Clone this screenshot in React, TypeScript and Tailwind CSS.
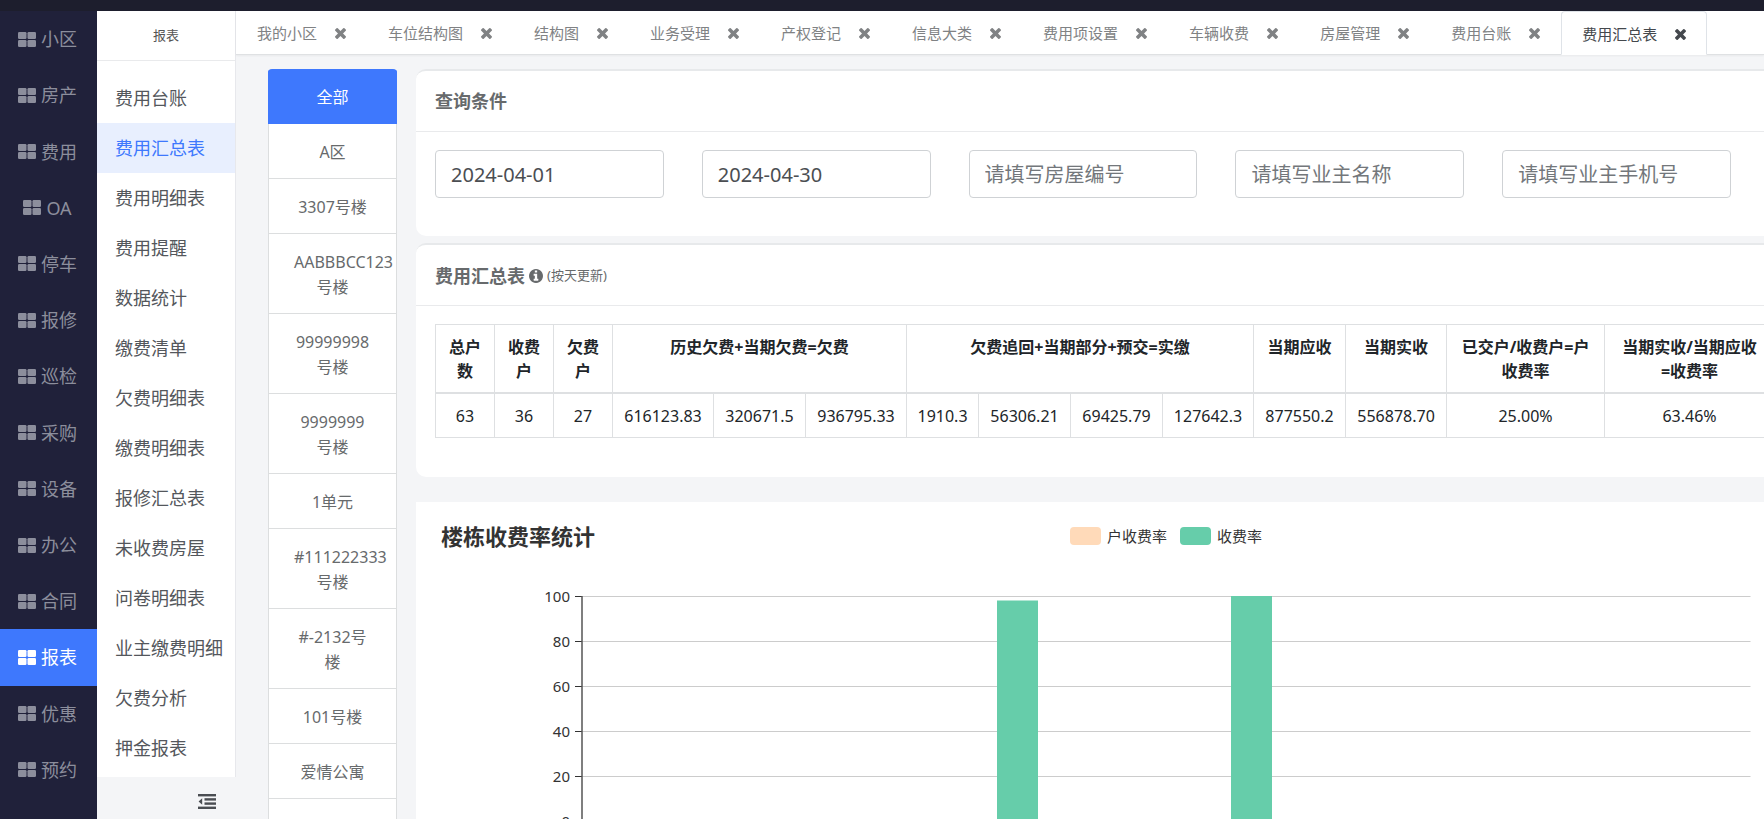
import React from 'react'

const modules = ['小区', '房产', '费用', 'OA', '停车', '报修', '巡检', '采购', '设备', '办公', '合同', '报表', '优惠', '预约']

const menus = [
  '费用台账',
  '费用汇总表',
  '费用明细表',
  '费用提醒',
  '数据统计',
  '缴费清单',
  '欠费明细表',
  '缴费明细表',
  '报修汇总表',
  '未收费房屋',
  '问卷明细表',
  '业主缴费明细',
  '欠费分析',
  '押金报表',
]

const tabs = [
  '我的小区',
  '车位结构图',
  '结构图',
  '业务受理',
  '产权登记',
  '信息大类',
  '费用项设置',
  '车辆收费',
  '房屋管理',
  '费用台账',
  '费用汇总表',
]

const floors = [
  '全部',
  'A区',
  '3307号楼',
  'AABBBCC123号楼',
  '99999998号楼',
  '9999999号楼',
  '1单元',
  '#111222333号楼',
  '#-2132号楼',
  '101号楼',
  '爱情公寓',
]

const filters = [
  { label: '开始时间', value: '2024-04-01' },
  { label: '结束时间', value: '2024-04-30' },
  { label: '房屋编号', placeholder: '请填写房屋编号' },
  { label: '业主名称', placeholder: '请填写业主名称' },
  { label: '业主手机号', placeholder: '请填写业主手机号' },
]

const headers = [
  { text: '总户数', span: 1 },
  { text: '收费户', span: 1 },
  { text: '欠费户', span: 1 },
  { text: '历史欠费+当期欠费=欠费', span: 3 },
  { text: '欠费追回+当期部分+预交=实缴', span: 4 },
  { text: '当期应收', span: 1 },
  { text: '当期实收', span: 1 },
  { text: '已交户/收费户=户收费率', span: 1 },
  { text: '当期实收/当期应收 =收费率', span: 1 },
]

const columns = [
  { value: '63', width: 59 },
  { value: '36', width: 59 },
  { value: '27', width: 59 },
  { value: '616123.83', width: 101 },
  { value: '320671.5', width: 92 },
  { value: '936795.33', width: 101 },
  { value: '1910.3', width: 72 },
  { value: '56306.21', width: 92 },
  { value: '69425.79', width: 92 },
  { value: '127642.3', width: 91 },
  { value: '877550.2', width: 92 },
  { value: '556878.70', width: 101 },
  { value: '25.00%', width: 158 },
  { value: '63.46%', width: 170 },
]

const ticks = [100, 80, 60, 40, 20, 0]

const bars = [
  { x: 581, value: 98 },
  { x: 815, value: 100 },
]

const GridIcon = () => (
  <svg className="w-[18px] h-[15px] shrink-0" viewBox="0 0 18 15" fill="currentColor" aria-hidden="true">
    <rect x="0" y="0" width="8.5" height="7" rx="1.2" />
    <rect x="9.5" y="0" width="8.5" height="7" rx="1.2" />
    <rect x="0" y="8" width="8.5" height="7" rx="1.2" />
    <rect x="9.5" y="8" width="8.5" height="7" rx="1.2" />
  </svg>
)

const CloseIcon = () => (
  <svg className="w-[11px] h-[11px]" viewBox="110 366 1188 1188" fill="currentColor" aria-hidden="true">
    <path d="M1298 1322q0 40-28 68l-136 136q-28 28-68 28t-68-28l-294-294-294 294q-28 28-68 28t-68-28l-136-136q-28-28-28-68t28-68l294-294-294-294q-28-28-28-68t28-68l136-136q28-28 68-28t68 28l294 294 294-294q28-28 68-28t68 28l136 136q28 28 28 68t-28 68l-294 294 294 294q28 28 28 68z" />
  </svg>
)

const InfoIcon = () => (
  <svg className="ml-1 w-[14px] h-[14px]" viewBox="128 128 1536 1536" fill="currentColor" aria-hidden="true">
    <path d="M1152 1376v-160q0-14-9-23t-23-9h-96v-512q0-14-9-23t-23-9h-320q-14 0-23 9t-9 23v160q0 14 9 23t23 9h96v320h-96q-14 0-23 9t-9 23v160q0 14 9 23t23 9h448q14 0 23-9t9-23zm-128-896v-160q0-14-9-23t-23-9h-192q-14 0-23 9t-9 23v160q0 14 9 23t23 9h192q14 0 23-9t9-23zm640 416q0 209-103 385.5t-279.5 279.5-385.5 103-385.5-103-279.5-279.5-103-385.5 103-385.5 279.5-279.5 385.5-103 385.5 103 279.5 279.5 103 385.5z" />
  </svg>
)

const OutdentIcon = () => (
  <svg className="w-[18px] h-[15px]" viewBox="0 0 18 15" fill="currentColor" aria-hidden="true">
    <rect x="0" y="0" width="18" height="2.4" />
    <rect x="6.5" y="4.2" width="11.5" height="2.4" />
    <rect x="6.5" y="8.4" width="11.5" height="2.4" />
    <rect x="0" y="12.6" width="18" height="2.4" />
    <path d="M4.2 4.2v6.6L0.6 7.5z" />
  </svg>
)

const ModuleNav: React.FC = () => (
  <nav className="w-[97px] shrink-0 bg-[#20213a] pb-[21px]">
    <ul className="grid h-full auto-rows-fr">
      {modules.map((name) => (
        <li key={name} className={name === '报表' ? 'bg-[#3e78fd] text-white' : 'text-[#8c8e9c]'}>
          <a href="#" className="flex h-full items-center justify-center gap-[5px] pr-0.5 text-lg">
            <GridIcon />
            <span>{name}</span>
          </a>
        </li>
      ))}
    </ul>
  </nav>
)

const SideMenu: React.FC = () => (
  <aside className="w-[139px] shrink-0">
    <div className="bg-white border-r border-[#e7e8ec] pb-1">
      <h2 className="h-[50px] border-b border-[#e9eaec] flex items-center justify-center text-[13px] text-[#555]">报表</h2>
      <ul className="pt-3">
        {menus.map((name) => (
          <li key={name}>
            <a
              href="#"
              className={`block h-[50px] pl-[18px] text-lg leading-[50px] whitespace-nowrap ${
                name === '费用汇总表' ? 'bg-[#e8effe] text-[#3e78fd]' : 'text-[#54575c]'
              }`}
            >
              {name}
            </a>
          </li>
        ))}
      </ul>
    </div>
    <div className="flex justify-end pr-5 pt-[17px]">
      <button type="button" aria-label="收起菜单" className="text-[#4a4d52]">
        <OutdentIcon />
      </button>
    </div>
  </aside>
)

const TabBar: React.FC = () => (
  <div className="flex h-11 shrink-0 bg-white border-b border-[#dfe1e3] shadow-xs">
    {tabs.map((name) => {
      const active = name === '费用汇总表'
      return (
        <div
          key={name}
          className={`flex shrink-0 items-center gap-[18px] border px-5 pt-0.5 text-[15px] ${
            active
              ? '-mb-px rounded-t border-[#dfe3e8] border-b-white bg-white text-[#44484d]'
              : 'border-transparent text-[#808284]'
          }`}
        >
          <a href="#">{name}</a>
          <button type="button" aria-label={`关闭${name}`}>
            <CloseIcon />
          </button>
        </div>
      )
    })}
  </div>
)

const FloorTree: React.FC = () => (
  <ul className="flex w-[129px] shrink-0 flex-col overflow-hidden rounded-t text-base leading-[25px]">
    {floors.map((name) => (
      <li key={name} className="shrink-0">
        <button
          type="button"
          className={`w-full border-x border-b px-[25px] pt-4 pb-[13px] text-center ${
            name === '全部' ? 'border-[#3e78fd] bg-[#3e78fd] text-white' : 'border-[#dcdedf] bg-white text-[#676a6c]'
          }`}
        >
          {name}
        </button>
      </li>
    ))}
    <li className="grow border-x border-[#dcdedf] bg-white"></li>
  </ul>
)

const FilterCard: React.FC = () => (
  <section className="rounded-l-[10px] border-t-2 border-[#e7e9eb] bg-white">
    <h3 className="h-[61px] border-b border-[#e9eaec] px-[19px] text-lg font-bold leading-[61px] text-[#676a6c]">查询条件</h3>
    <div className="grid grid-cols-5 gap-x-[38px] pt-[18px] pr-[33px] pb-[38px] pl-[19px]">
      {filters.map((f) => (
        <input
          key={f.label}
          type="text"
          aria-label={f.label}
          defaultValue={f.value}
          placeholder={f.placeholder}
          className="h-12 w-full min-w-0 rounded border border-[#cfd2d5] bg-white px-[15px] text-xl text-[#4b4e52] placeholder:text-[#73777b]"
        />
      ))}
    </div>
  </section>
)

const SummaryCard: React.FC = () => (
  <section className="mt-[7px] rounded-l-[10px] border-t-2 border-[#e7e9eb] bg-white">
    <div className="flex h-[61px] items-center border-b border-[#e9eaec] px-[19px] pt-px text-[#676a6c]">
      <h3 className="text-lg font-bold">费用汇总表</h3>
      <InfoIcon />
      <span className="ml-1 text-[13px]">(按天更新)</span>
    </div>
    <div className="overflow-hidden pt-[18px] pb-[39px] pl-[19px]">
      <table className="w-[1339px] table-fixed border-collapse text-center text-base leading-6 text-[#212529]">
        <colgroup>
          {columns.map((c, i) => (
            <col key={i} style={{ width: c.width }} />
          ))}
        </colgroup>
        <thead>
          <tr>
            {headers.map((h) => (
              <th key={h.text} colSpan={h.span} className="border border-b-2 border-[#dee0e2] px-3 pt-2.5 pb-[9px] align-top font-bold">
                {h.text}
              </th>
            ))}
          </tr>
        </thead>
        <tbody>
          <tr>
            {columns.map((c, i) => (
              <td key={i} className="border border-[#dee0e2] pt-2.5 pb-[9px]">
                {c.value}
              </td>
            ))}
          </tr>
        </tbody>
      </table>
    </div>
  </section>
)

const RateChart: React.FC = () => (
  <section className="mt-[25px] grow bg-white">
    <div className="flex items-center pt-4 pb-0.5 pl-[25px] text-[15px] text-[#333]">
      <h3 className="w-[629px] shrink-0 text-[22px] font-bold leading-9">楼栋收费率统计</h3>
      <span className="mr-[6px] h-[18px] w-[31px] rounded bg-[#ffdab9]"></span>
      <span>户收费率</span>
      <span className="mr-[6px] ml-[13px] h-[18px] w-[31px] rounded bg-[#66cdaa]"></span>
      <span>收费率</span>
    </div>
    <svg className="h-[280px] w-full" role="img" aria-label="楼栋收费率统计">
      {ticks.map((t) => {
        const y = 40.5 + (100 - t) * 2.25
        return (
          <g key={t}>
            <line x1="166" x2="99%" y1={y} y2={y} stroke="#ccc" />
            <line x1="159" x2="166" y1={y} y2={y} stroke="#333" />
            <text x="154" y={y + 5} textAnchor="end" fontSize="15" fill="#333">
              {t}
            </text>
          </g>
        )
      })}
      <line x1="166" x2="166" y1="40" y2="266" stroke="#555" strokeWidth="1.5" />
      {bars.map((b) => (
        <rect key={b.x} x={b.x} y={40 + (100 - b.value) * 2.25} width="41" height={b.value * 2.25} fill="#66cdaa" />
      ))}
    </svg>
  </section>
)

export default function App() {
  return (
    <div className="flex h-screen flex-col overflow-hidden bg-[#f4f5f7] font-['Noto_Sans','Noto_Sans_CJK_SC',sans-serif]">
      <header className="h-[11px] shrink-0 bg-[#1d1e2d]"></header>
      <div className="flex min-h-0 grow">
        <ModuleNav />
        <SideMenu />
        <div className="flex min-w-0 grow flex-col">
          <TabBar />
          <main className="flex min-h-0 grow pt-[14px] pl-8">
            <FloorTree />
            <div className="ml-[19px] flex min-w-0 grow flex-col">
              <FilterCard />
              <SummaryCard />
              <RateChart />
            </div>
          </main>
        </div>
      </div>
    </div>
  )
}
